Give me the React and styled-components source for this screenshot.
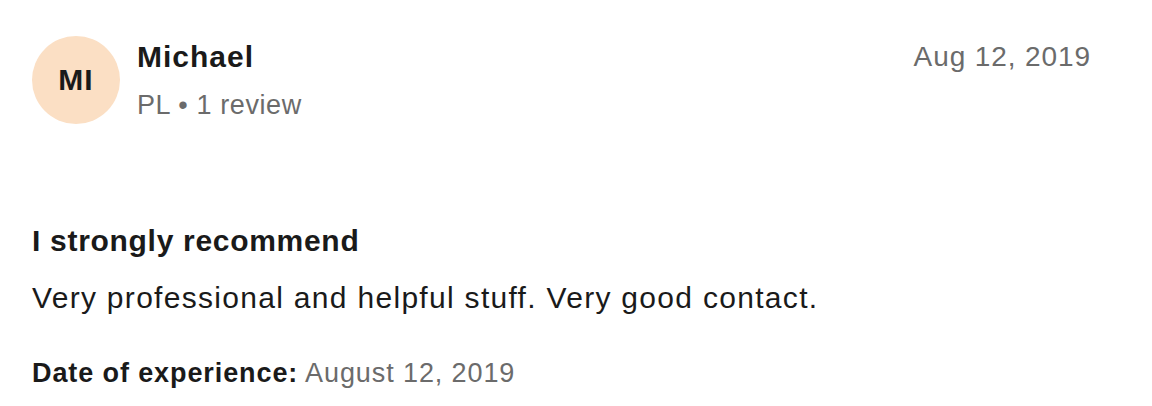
import React from "react";
import styled, { createGlobalStyle } from "styled-components";

const Global = createGlobalStyle`
  html, body { margin: 0; padding: 0; background: #ffffff; }
  body { font-family: "Liberation Sans", Arial, Helvetica, sans-serif; color: #1a1a1a; }
`;

const Card = styled.article`
  box-sizing: border-box;
  width: 1152px;
  height: 406px;
  padding: 36px 62px 0 32px;
  display: flex;
  flex-direction: column;
`;

const Header = styled.header`
  display: flex;
  align-items: flex-start;
  gap: 17px;
`;

const Avatar = styled.div`
  width: 88px;
  height: 88px;
  border-radius: 50%;
  background: #fbdfc4;
  display: flex;
  align-items: center;
  justify-content: center;
  font-weight: 700;
  font-size: 30px;
  letter-spacing: 1px;
  color: #1a1a1a;
  flex-shrink: 0;
`;

const Consumer = styled.div`
  display: flex;
  flex-direction: column;
  flex: 1;
  padding-top: 3px;
`;

const Name = styled.div`
  font-weight: 700;
  font-size: 30px;
  line-height: 36px;
  letter-spacing: 1px;
  color: #1a1a1a;
`;

const Meta = styled.div`
  font-size: 27px;
  line-height: 34px;
  letter-spacing: 0.6px;
  margin-top: 13px;
  color: #6b6b6b;
`;

const Time = styled.time`
  font-size: 28px;
  line-height: 36px;
  letter-spacing: 0.9px;
  color: #6b6b6b;
  padding-top: 3px;
  margin-right: -1px;
`;

const Body = styled.section`
  display: flex;
  flex-direction: column;
  margin-top: 99px;
`;

const Title = styled.h2`
  margin: 0;
  font-weight: 700;
  font-size: 30px;
  line-height: 36px;
  letter-spacing: 0.7px;
  color: #1a1a1a;
`;

const Text = styled.p`
  margin: 21px 0 0;
  font-size: 30px;
  line-height: 36px;
  letter-spacing: 1.3px;
  color: #1a1a1a;
`;

const Experience = styled.p`
  margin: 40px 0 0;
  font-size: 27px;
  line-height: 34px;
  letter-spacing: 0.9px;
  color: #6b6b6b;
`;

const Label = styled.strong`
  font-weight: 700;
  color: #1a1a1a;
`;

export default function App() {
  return (
    <>
      <Global />
      <Card>
        <Header>
          <Avatar>MI</Avatar>
          <Consumer>
            <Name>Michael</Name>
            <Meta>PL • 1 review</Meta>
          </Consumer>
          <Time dateTime="2019-08-12">Aug 12, 2019</Time>
        </Header>
        <Body>
          <Title>I strongly recommend</Title>
          <Text>Very professional and helpful stuff. Very good contact.</Text>
          <Experience>
            <Label>Date of experience:</Label> August 12, 2019
          </Experience>
        </Body>
      </Card>
    </>
  );
}
